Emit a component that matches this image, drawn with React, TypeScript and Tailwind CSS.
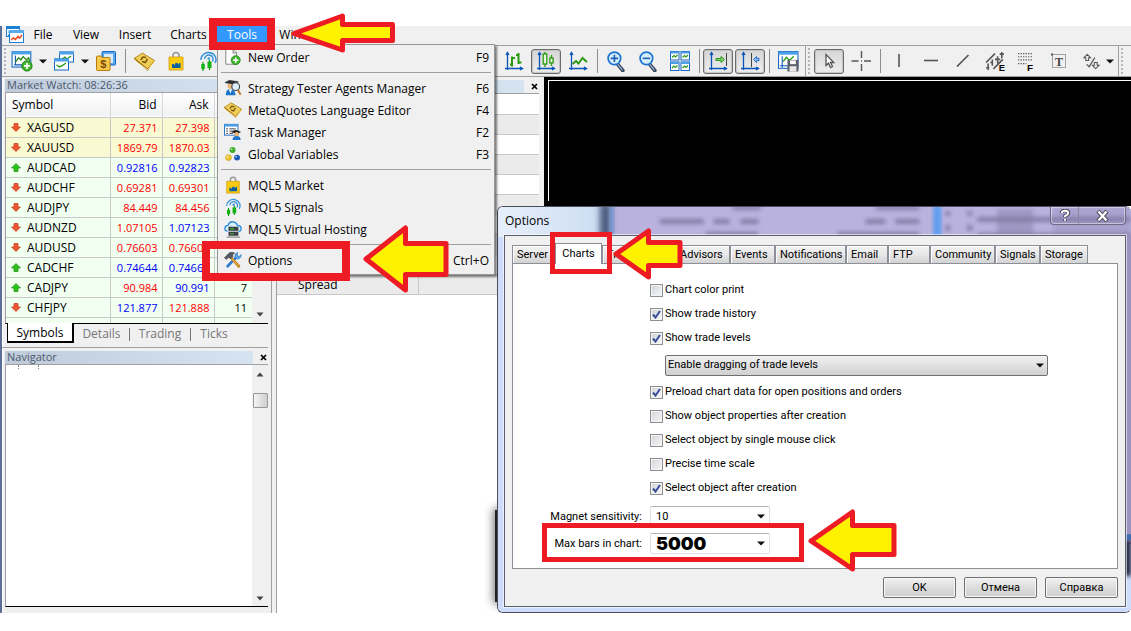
import React from "react";

type Dir = "up" | "down";
type Tone = "r" | "b";
type Quote = { name: string; dir: Dir; bid: string; bidTone: Tone; ask: string; askTone: Tone; spread?: string; metal?: boolean };

const quotes: Quote[] = [
  { name: "XAGUSD", dir: "down", bid: "27.371", bidTone: "r", ask: "27.398", askTone: "r", metal: true },
  { name: "XAUUSD", dir: "down", bid: "1869.79", bidTone: "r", ask: "1870.03", askTone: "r", metal: true },
  { name: "AUDCAD", dir: "up", bid: "0.92816", bidTone: "b", ask: "0.92823", askTone: "b" },
  { name: "AUDCHF", dir: "down", bid: "0.69281", bidTone: "r", ask: "0.69301", askTone: "r" },
  { name: "AUDJPY", dir: "down", bid: "84.449", bidTone: "r", ask: "84.456", askTone: "r" },
  { name: "AUDNZD", dir: "down", bid: "1.07105", bidTone: "r", ask: "1.07123", askTone: "b" },
  { name: "AUDUSD", dir: "down", bid: "0.76603", bidTone: "r", ask: "0.76609", askTone: "r" },
  { name: "CADCHF", dir: "up", bid: "0.74644", bidTone: "b", ask: "0.74661", askTone: "b" },
  { name: "CADJPY", dir: "up", bid: "90.984", bidTone: "r", ask: "90.991", askTone: "b", spread: "7" },
  { name: "CHFJPY", dir: "down", bid: "121.877", bidTone: "b", ask: "121.888", askTone: "r", spread: "11" },
];

const toneClass: Record<Tone, string> = { r: "text-[#ff0000]", b: "text-[#0000ff]" };

/* ---------- icons ---------- */

function Svg({ s = 20, children }: { s?: number; children: React.ReactNode }) {
  return (
    <svg width={s} height={s} viewBox="0 0 20 20" fill="none" aria-hidden="true" className="block shrink-0">
      {children}
    </svg>
  );
}

const Axes = () => (
  <path d="M3.5 1v18M1 17.5h18M2 4l1.5-2.5L5 4M16 16l2.5 1.5L16 19" stroke="#0b55b8" strokeWidth="1.3" />
);

const AppIcon = () => (
  <svg width="18" height="18" viewBox="0 0 18 18" fill="none" aria-hidden="true" className="block">
    <rect x="0.5" y="0.5" width="13" height="10" fill="#fff" stroke="#1b7fd6" />
    <rect x="0" y="0" width="14" height="3" fill="#1b7fd6" />
    <path d="M2 10l2-3M2 6h3" stroke="#1b7fd6" />
    <rect x="3.5" y="4.5" width="14" height="12" fill="#fff" stroke="#1b7fd6" />
    <rect x="3" y="4" width="15" height="3" fill="#58a8ec" />
    <path d="M5 14l2.5-2 2 1.5 2.500-3 1.500 1.500 2.500-3" stroke="#ee4b1e" strokeWidth="1.6" />
  </svg>
);

const ChartAddIcon = () => (
  <Svg s={22}>
    <rect x="1" y="1.500" width="17" height="14" fill="#fff" stroke="#1467c4" />
    <rect x="1" y="1" width="17" height="3" fill="#4ba0e8" />
    <path d="M4 5v9M3 13.500h13" stroke="#0b55b8" />
    <path d="M4 11l3-4 2 2 2-3 3 3 2-2 1 3" stroke="#2a8a12" strokeWidth="1.200" />
    <circle cx="14.500" cy="14.500" r="4.700" fill="#43b431" stroke="#1d7a12" strokeWidth="0.800" />
    <path d="M14.500 11.800v5.400M11.800 14.500h5.400" stroke="#fff" strokeWidth="1.600" />
  </Svg>
);

const WindowsIcon = () => (
  <Svg s={20}>
    <rect x="5.500" y="1" width="14" height="10" fill="#fff" stroke="#1467c4" />
    <rect x="5" y="0.500" width="15" height="3" fill="#4ba0e8" />
    <path d="M8 8l3-2 2 2 4-3" stroke="#2a9a12" strokeWidth="1.200" />
    <rect x="0.500" y="8" width="14" height="11" fill="#fff" stroke="#1467c4" />
    <rect x="0" y="7.500" width="15" height="3" fill="#4ba0e8" />
    <path d="M2.500 14l3 2 3-1.500 3.500-2.500" stroke="#2a9a12" strokeWidth="1.400" />
  </Svg>
);

const DollarIcon = () => (
  <Svg s={20}>
    <path d="M6 1.500q0-1 1-1h11.500q1 0 1 1v11.500q0 1-1 1H6z" fill="#5aa9ee" stroke="#1467c4" />
    <rect x="8" y="3" width="9" height="9" fill="#d8ecfb" />
    <path d="M.500 6q0-1 1-1h3.500l1 1.500h7q1 0 1 1v11q0 1-1 1H1.500q-1 0-1-1z" fill="#f6c84c" stroke="#b67a08" />
    <text x="7.200" y="17" textAnchor="middle" fontSize="11" fontWeight="bold" fontFamily="Liberation Sans, sans-serif" fill="#7a4a00">$</text>
  </Svg>
);

const EditorIcon = ({ s = 20 }: { s?: number }) => (
  <Svg s={s}>
    <path d="M.500 8l12.500 11 6-8.500v-2L13 14.500.500 6z" fill="#9a6a10" />
    <path d="M.500 7L8 2l11.500 7-6.500 8z" fill="#f0cf5a" stroke="#a9780f" strokeWidth="0.800" />
    <path d="M1 9.500L13 18l6-7" stroke="#fff2b8" strokeWidth="0.900" />
    <path d="M6.500 8.500l2-2.700 3 .400M12.800 7.500l-2 3.500-3-1" stroke="#7d5808" strokeWidth="1.500" />
    <path d="M14 15.500l5-6" stroke="#d9b43c" strokeWidth="1.400" />
  </Svg>
);

const BagIcon = ({ s = 20 }: { s?: number }) => (
  <Svg s={s}>
    <path d="M7 7V4.500q0-3 3-3t3 3V7" stroke="#9a9a9a" strokeWidth="1.700" />
    <path d="M3 6h14v13H3z" fill="#fbcb12" stroke="#d79c06" strokeWidth="0.800" />
    <path d="M6 17v-4h2v2l1.500-3h2l1.500 2v-2h1.500v5z" fill="#0a5f9e" />
  </Svg>
);

const SignalsIcon = ({ s = 20 }: { s?: number }) => (
  <Svg s={s}>
    <path d="M3 9a7.500 7 0 1 1 14 3M6.500 8a4.300 4.300 0 1 1 8 2.500" stroke="#3391dc" strokeWidth="1.400" />
    <circle cx="10.800" cy="7.500" r="1.300" fill="#3391dc" />
    <path d="M5 11v9M11.500 9v10" stroke="#0c9a0c" strokeWidth="1.200" />
    <rect x="3.300" y="13" width="3.500" height="5" fill="#12b212" />
    <rect x="9.500" y="10.500" width="4" height="6.500" fill="#12b212" />
  </Svg>
);

const BarsIcon = () => (
  <Svg>
    <Axes />
    <path d="M8 5.500v10M6 13.500h2M8 7h3M14.500 2v11M12 4h2.500M14.500 11.500h3" stroke="#289a10" strokeWidth="2" />
  </Svg>
);
const CandlesIcon = () => (
  <Svg>
    <Axes />
    <path d="M9 1v15M15.500 4v11" stroke="#289a10" strokeWidth="1.300" />
    <rect x="7.200" y="3" width="3.600" height="10" fill="#e8f7e2" stroke="#289a10" strokeWidth="1.300" />
    <rect x="13.900" y="7" width="3.200" height="5" fill="#e8f7e2" stroke="#289a10" strokeWidth="1.300" />
  </Svg>
);
const LineIcon = () => (
  <Svg>
    <Axes />
    <path d="M4.500 13l3.500-3 2.500 2.500 4-5.500 4.500 4" stroke="#289a10" strokeWidth="1.900" />
  </Svg>
);
const ZoomIcon = ({ plus = false }: { plus?: boolean }) => (
  <Svg s={21}>
    <path d="M11 12.500l5 6" stroke="#3c4a63" strokeWidth="3.600" strokeLinecap="round" />
    <path d="M11 12.500l4.500 5.500" stroke="#9fb2cf" strokeWidth="1.200" />
    <circle cx="8" cy="7" r="6" fill="#d6edfd" stroke="#1c74cf" strokeWidth="1.600" />
    <path d={plus ? "M4.500 7h7M8 3.500v7" : "M4.500 7h7"} stroke="#1a5fb4" strokeWidth="1.500" />
  </Svg>
);
const TileIcon = () => (
  <Svg s={20}>
    {[[0, 0], [10.500, 0], [0, 10.500], [10.500, 10.500]].map(([x, y], i) => (
      <g key={i} transform={`translate(${x} ${y})`}>
        <rect x="0.500" y="0.500" width="8.500" height="8.500" fill="#fff" stroke="#1467c4" />
        <rect x="0.500" y="0.500" width="8.500" height="2" fill="#4ba0e8" />
        <path d="M2 6.500l2-2 1.500 1.500 2-2" stroke="#289a10" strokeWidth="1.100" />
      </g>
    ))}
  </Svg>
);
const AutoScrollIcon = () => (
  <Svg>
    <Axes />
    <path d="M18.500 2v13" stroke="#444" strokeWidth="1" />
    <path d="M8 7.500h5V5.500L16.500 8.500 13 11.500V9.500H8z" fill="#8ad874" stroke="#1f8a0e" strokeWidth="0.900" />
  </Svg>
);
const ShiftIcon = () => (
  <Svg>
    <Axes />
    <path d="M11.500 2v14" stroke="#444" strokeWidth="1" />
    <path d="M19 7.300h-2.500V5.500L13.500 8.500l3 3V9.700H19z" fill="#8cbdf5" stroke="#1c62c4" strokeWidth="0.900" />
  </Svg>
);
const TemplateIcon = () => (
  <Svg s={21}>
    <rect x="0.500" y="0.500" width="18.500" height="16" fill="#fff" stroke="#1467c4" />
    <rect x="0.500" y="0.500" width="18.500" height="3" fill="#4ba0e8" />
    <path d="M4 5v11M2 14h8" stroke="#0b55b8" />
    <path d="M5 10l3-4 3 3 4-4" stroke="#289a10" strokeWidth="1.200" />
    <path d="M9 8.500h10.500v11H9z" fill="#5c6068" />
    <rect x="11.500" y="9" width="5.500" height="3.500" fill="#fff" />
    <rect x="11" y="14.500" width="6.500" height="5" fill="#e8e8e8" />
  </Svg>
);
const CursorIcon = () => (
  <Svg>
    <path d="M7 3.500v11l2.500-2.300 2 4.300 2-1-2-4h3.300z" fill="#fff" stroke="#555" strokeWidth="1.300" />
  </Svg>
);
const CrossIcon = () => (
  <Svg>
    <path d="M10.500 0v7M10.500 13v7M0.500 10h7M13 10h7M10 10h1" stroke="#555" strokeWidth="1.400" />
  </Svg>
);
const VLineIcon = () => (<Svg><path d="M10 3v13" stroke="#555" strokeWidth="1.600" /></Svg>);
const HLineIcon = () => (<Svg><path d="M3 9.500h14" stroke="#555" strokeWidth="1.600" /></Svg>);
const DLineIcon = () => (<Svg><path d="M4 15.500L15.500 4" stroke="#555" strokeWidth="1.700" /></Svg>);
const ChannelIcon = () => (
  <Svg s={21}>
    <path d="M1 11L9.500 2.500M8 17L17 8M3 18v-6M1 16h3M7 14V8M5 11h2M12 12V5M9.500 8h5M16 7V1M14 3h4" stroke="#555" strokeWidth="1.500" />
    <text x="13" y="19.500" fontSize="9" fontWeight="bold" fontFamily="Liberation Sans, sans-serif" fill="#000">E</text>
  </Svg>
);
const FiboIcon = () => (
  <Svg s={21}>
    <path d="M1 2.500h14M1 5.500h14M1 8.500h14M1 12h8" stroke="#555" strokeWidth="1.100" strokeDasharray="1.200 1.200" />
    <text x="9.500" y="19.500" fontSize="9.500" fontWeight="bold" fontFamily="Liberation Sans, sans-serif" fill="#000">F</text>
  </Svg>
);
const TextIcon = () => (
  <Svg s={20}>
    <rect x="3.500" y="3.500" width="13" height="13" stroke="#555" strokeDasharray="1 1" />
    <path d="M2 2.500h2v2H2z" fill="#555" />
    <text x="10" y="14.500" textAnchor="middle" fontSize="12" fontWeight="bold" fontFamily="Liberation Serif, serif" fill="#444">T</text>
  </Svg>
);
const ArrowsIcon = () => (
  <Svg s={19}>
    <path d="M5.500 2.500L9 6H7v3H4V6H2zM14.500 17.500L11 14h2v-3h3v3h2z" stroke="#555" strokeWidth="1.100" />
    <path d="M5 13l2.500 2.500L13.500 6" stroke="#555" strokeWidth="1.300" />
  </Svg>
);

const NewOrderIcon = () => (
  <Svg s={18}>
    <path d="M2 1.500h8l4 4V18H2z" fill="#fff" stroke="#7a7a7a" />
    <path d="M10 1.500v4h4" stroke="#7a7a7a" />
    <circle cx="13" cy="13.500" r="5" fill="#43b431" stroke="#1d7a12" strokeWidth="0.800" />
    <path d="M13 10.500v6M10 13.500h6" stroke="#fff" strokeWidth="1.700" />
  </Svg>
);
const AgentsIcon = () => (
  <Svg s={18}>
    <path d="M1 4l5-2.500L16 3l-4 3.500z" fill="#2c3138" stroke="#111" strokeWidth="0.500" />
    <path d="M4 5.500h6v4q-3 3-6 0z" fill="#e9b77a" />
    <path d="M2 18q0-7 5-7t6 7z" fill="#1d76c9" />
    <path d="M5.500 11.500L7 16l2-4.500z" fill="#fff" />
    <circle cx="13" cy="8.500" r="4.300" fill="#dceefb" stroke="#444" strokeWidth="1.300" />
    <path d="M15.500 12.500l3 5" stroke="#c17a2a" strokeWidth="2.200" />
  </Svg>
);
const TaskIcon = () => (
  <Svg s={18}>
    <rect x="0.500" y="1.500" width="15" height="12" fill="#fff" stroke="#1467c4" />
    <rect x="0.500" y="1.500" width="15" height="2.500" fill="#4ba0e8" />
    <path d="M2.500 6.500h2M2.500 9h2M2.500 11.500h2M6 6.500h7M6 9h7M6 11.500h4" stroke="#444" strokeWidth="1.100" />
    <path d="M8 10l5-2.500 6 2.500-5 2.500z" fill="#222" />
    <circle cx="14" cy="12.500" r="2.500" fill="#e9b77a" />
    <path d="M9.500 19q0-4.500 4.500-4.500T18.500 19z" fill="#1d76c9" />
  </Svg>
);
const GlobalsIcon = () => (
  <Svg s={18}>
    <circle cx="9.500" cy="5.500" r="3.300" fill="#3dae2b" />
    <circle cx="5" cy="14" r="3.300" fill="#efc52d" stroke="#b8900f" strokeWidth="0.600" />
    <circle cx="14.500" cy="14" r="3.300" fill="#1b56b8" />
    <circle cx="8.500" cy="4.500" r="1" fill="#c6f2ba" />
    <circle cx="4" cy="13" r="1" fill="#fff5b8" />
    <circle cx="13.500" cy="13" r="1" fill="#a8c8f8" />
  </Svg>
);
const HostingIcon = () => (
  <Svg s={18}>
    <path d="M4 12.500q-3.500-.500-3-3.500t3.500-3Q6 1.500 10 2t5 4q4 0 4 3.500t-3 3" fill="#d9effc" stroke="#2688d8" strokeWidth="1.400" />
    <rect x="5" y="7.500" width="11" height="4.500" fill="#3a3f45" />
    <rect x="5" y="13" width="11" height="4.500" fill="#3a3f45" />
    <path d="M7 9.800h4M7 15.300h4" stroke="#35c235" strokeWidth="1.300" />
    <path d="M3 19h15" stroke="#666" strokeWidth="1" />
  </Svg>
);
const OptionsIcon = () => (
  <Svg s={18}>
    <path d="M4 17L14.500 6" stroke="#2f7fd0" strokeWidth="3" strokeLinecap="round" />
    <path d="M12.500 7.500q-1.500-4 2.500-6L14.500 5l2 1.500L19 4q0 5-4.500 5z" fill="#67b2f2" stroke="#1b64b5" strokeWidth="0.700" />
    <path d="M7 6.500L16.500 17" stroke="#c4801e" strokeWidth="3.200" strokeLinecap="round" />
    <path d="M7 6.500l9 10" stroke="#f3c565" strokeWidth="1" />
    <path d="M0.500 7.500L6 2q3-1.500 6 .500l-2.500 1L10 6 7.500 8.500 5.500 7 2.500 9.500z" fill="#555c66" stroke="#222" strokeWidth="0.500" />
  </Svg>
);

const Caret = () => (
  <svg width="8" height="5" viewBox="0 0 8 5" aria-hidden="true" className="block shrink-0">
    <path d="M0 0.500h8L4 4.500z" fill="#111" />
  </svg>
);

const DirArrow = ({ dir }: { dir: Dir }) => (
  <svg width="10" height="9" viewBox="0 0 10 9" aria-hidden="true" className="block shrink-0">
    {dir === "down" ? (
      <path d="M3 .500h4V4h2.500L5 8.500.500 4H3z" fill="#f0562f" stroke="#bf3a17" strokeWidth="0.700" />
    ) : (
      <path d="M3 8.500h4V5h2.500L5 .500.500 5H3z" fill="#2fc41c" stroke="#178a0a" strokeWidth="0.700" />
    )}
  </svg>
);

/* ---------- toolbar ---------- */

function Tool({ label, pressed = false, children }: { label: string; pressed?: boolean; children: React.ReactNode }) {
  return (
    <button
      type="button"
      aria-label={label}
      className={
        pressed
          ? "flex h-[25px] w-[30px] shrink-0 items-center justify-center rounded-[3px] border border-[#6a6a6a] bg-gradient-to-b from-[#d6d6d6] to-[#efefef] shadow-[inset_0_0_1px_1px_#c4c4c4]"
          : "flex h-[25px] w-[30px] shrink-0 items-center justify-center"
      }
    >
      {children}
    </button>
  );
}
const Sep = () => (
  <div className="flex w-1 shrink-0 justify-center">
    <div className="h-6 w-px bg-[#8e8e8e]" />
  </div>
);
const Grip = () => <div className="ml-[2px] h-[26px] w-[3px] shrink-0 border-l-2 border-dotted border-[#b5b5b5]" />;

function Toolbar() {
  return (
    <div className="flex h-[32px] items-center overflow-hidden border-y border-[#a0a0a0] bg-[#f0f0f0]">
      <Grip />
      <div className="flex items-center gap-[2px]">
        <Tool label="New chart"><ChartAddIcon /></Tool>
        <button type="button" aria-label="New chart list" className="w-2"><Caret /></button>
        <Tool label="Profiles"><WindowsIcon /></Tool>
        <button type="button" aria-label="Profile list" className="w-2"><Caret /></button>
        <Tool label="Market Watch"><DollarIcon /></Tool>
        <Sep />
        <Tool label="MetaQuotes Language Editor"><EditorIcon s={21} /></Tool>
        <Tool label="Market"><BagIcon /></Tool>
        <Tool label="Signals"><SignalsIcon /></Tool>
      </div>
      <div className="ml-[276px] flex items-center gap-[2px]">
        <Tool label="Bar chart"><BarsIcon /></Tool>
        <Tool label="Candlesticks" pressed><CandlesIcon /></Tool>
        <Tool label="Line chart"><LineIcon /></Tool>
        <Sep />
        <Tool label="Zoom in"><ZoomIcon plus /></Tool>
        <Tool label="Zoom out"><ZoomIcon /></Tool>
        <Tool label="Tile windows"><TileIcon /></Tool>
        <Sep />
        <Tool label="Auto scroll" pressed><AutoScrollIcon /></Tool>
        <Tool label="Chart shift" pressed><ShiftIcon /></Tool>
        <Sep />
        <Tool label="Templates"><TemplateIcon /></Tool>
      </div>
      <div className="ml-[2px] h-full w-px shrink-0 bg-[#a0a0a0]" />
      <Grip />
      <div className="ml-[3px] flex items-center gap-[2px]">
        <Tool label="Cursor" pressed><CursorIcon /></Tool>
        <Tool label="Crosshair"><CrossIcon /></Tool>
        <Sep />
        <Tool label="Vertical line"><VLineIcon /></Tool>
        <Tool label="Horizontal line"><HLineIcon /></Tool>
        <Tool label="Trend line"><DLineIcon /></Tool>
        <Tool label="Equidistant channel"><ChannelIcon /></Tool>
        <Tool label="Fibonacci"><FiboIcon /></Tool>
        <Tool label="Text"><TextIcon /></Tool>
        <Tool label="Arrows"><ArrowsIcon /></Tool>
      </div>
      <button type="button" aria-label="Arrow list" className="w-2 shrink-0"><Caret /></button>
      <div className="ml-[4px] h-full w-px shrink-0 bg-[#a0a0a0]" />
      <Grip />
    </div>
  );
}

/* ---------- menu ---------- */

function MenuRow({ icon, label, hint }: { icon: React.ReactNode; label: string; hint?: string }) {
  return (
    <button type="button" role="menuitem" className="flex h-[22px] w-full items-center gap-[6px] pr-[5px] pl-[6px] text-left text-black">
      {icon}
      <span className="flex-1">{label}</span>
      {hint && <span>{hint}</span>}
    </button>
  );
}
const MenuSep = () => (
  <div className="flex h-[9px] items-center">
    <div className="mx-[3px] h-px flex-1 bg-[#a0a0a0]" />
  </div>
);

function ToolsMenu() {
  return (
    <div role="menu" className="absolute top-[18px] left-0 z-10 w-[278px] border border-[#979797] bg-[#f0f0f0] pt-px pb-[3px] shadow-[2px_2px_2px_rgba(0,0,0,0.5)]">
      <MenuRow icon={<NewOrderIcon />} label="New Order" hint="F9" />
      <MenuSep />
      <MenuRow icon={<AgentsIcon />} label="Strategy Tester Agents Manager" hint="F6" />
      <MenuRow icon={<EditorIcon s={18} />} label="MetaQuotes Language Editor" hint="F4" />
      <MenuRow icon={<TaskIcon />} label="Task Manager" hint="F2" />
      <MenuRow icon={<GlobalsIcon />} label="Global Variables" hint="F3" />
      <MenuSep />
      <MenuRow icon={<BagIcon s={18} />} label="MQL5 Market" />
      <MenuRow icon={<SignalsIcon s={18} />} label="MQL5 Signals" />
      <MenuRow icon={<HostingIcon />} label="MQL5 Virtual Hosting" />
      <MenuSep />
      <MenuRow icon={<OptionsIcon />} label="Options" hint="Ctrl+O" />
    </div>
  );
}

function MenuBar() {
  return (
    <div className="flex h-[19px] items-start bg-[#f0f0f0] pl-[4px] text-[12px] leading-[17px]">
      <AppIcon />
      <button type="button" className="w-[38px]">File</button>
      <button type="button" className="w-[48px]">View</button>
      <button type="button" className="w-[50px]">Insert</button>
      <button type="button" className="w-[57px]">Charts</button>
      <div className="relative w-[50px]">
        <button type="button" className="w-full bg-[#3399ff] text-white">Tools</button>
        <ToolsMenu />
      </div>
      <button type="button" className="w-[70px]">Window</button>
    </div>
  );
}

/* ---------- docked panels ---------- */

function DockTitle({ children }: { children?: React.ReactNode }) {
  return (
    <div className="flex h-[14px] items-center justify-between pr-px">
      <div className="h-[13px] flex-1 bg-gradient-to-r from-[#bfcbdb] to-[#d6e4f1] pl-[2px] text-[11px] leading-[12px] whitespace-nowrap text-[#4c5a6b]">{children}</div>
      <button type="button" aria-label="Close" className="ml-[7px] block">
        <svg width="7" height="7" viewBox="0 0 7 7" aria-hidden="true"><path d="M1 1l5 5M6 1L1 6" stroke="#000" strokeWidth="1.700" /></svg>
      </button>
    </div>
  );
}

const ScrollArrow = ({ up = false }: { up?: boolean }) => (
  <svg width="8" height="5" viewBox="0 0 8 5" aria-hidden="true" className="block">
    <path d={up ? "M.500 4.500h7L4 .500z" : "M.500.500h7L4 4.500z"} fill="#444" />
  </svg>
);

function MarketWatch() {
  return (
    <section>
      <DockTitle>Market Watch: 08:26:36</DockTitle>
      <div className="flex h-[232px] overflow-hidden border-t border-b border-l border-t-[#a0a0a0] border-b-black border-l-[#a0a0a0] bg-[#f0fff0]">
        <table className="h-full w-[246px] table-fixed border-collapse text-[12px] leading-[15px]">
          <colgroup>
            <col className="w-[104px]" />
            <col className="w-[52px]" />
            <col className="w-[52px]" />
            <col />
          </colgroup>
          <thead>
            <tr className="h-[24px] border-b border-[#c8c8c8] bg-gradient-to-b from-white to-[#f1f2f4]">
              <th className="border-r border-[#d8d8d8] pl-[6px] text-left font-normal">Symbol</th>
              <th className="border-r border-[#d8d8d8] pr-[5px] text-right font-normal">Bid</th>
              <th className="border-r border-[#d8d8d8] pr-[5px] text-right font-normal">Ask</th>
              <th aria-label="Spread" />
            </tr>
          </thead>
          <tbody>
            {quotes.map((q) => (
              <tr key={q.name} className={q.metal ? "h-[20px] border-b border-[#c8c8c8] bg-[#fafad2]" : "h-[20px] border-b border-[#c8c8c8] bg-[#f0fff0]"}>
                <td className="border-r border-[#c8c8c8]">
                  <span className="flex items-center gap-[6px] pl-[5px]"><DirArrow dir={q.dir} />{q.name}</span>
                </td>
                <td className={`border-r border-[#c8c8c8] pr-[4px] text-right text-[11px] ${toneClass[q.bidTone]}`}>{q.bid}</td>
                <td className={`border-r border-[#c8c8c8] pr-[4px] text-right text-[11px] ${toneClass[q.askTone]}`}>{q.ask}</td>
                <td className="pr-[5px] text-right text-[11px]">{q.spread}</td>
              </tr>
            ))}
            <tr>
              <td className="border-r border-[#c8c8c8]" />
              <td className="border-r border-[#c8c8c8]" />
              <td className="border-r border-[#c8c8c8]" />
              <td />
            </tr>
          </tbody>
        </table>
        <div className="flex flex-1 flex-col items-center justify-end bg-[#f0f0f0] pb-[6px]"><ScrollArrow /></div>
      </div>
      <div className="flex h-[23px] items-start text-[12px] leading-[19px] text-[#777]">
        <button type="button" className="-mt-px ml-[2px] h-[20px] w-[67px] border border-t-0 border-r-2 border-b-2 border-black bg-white text-black">Symbols</button>
        <button type="button" className="w-[55px]">Details</button>
        <span className="mt-[4px] h-[13px] w-px bg-[#777]" />
        <button type="button" className="w-[60px]">Trading</button>
        <span className="mt-[4px] h-[13px] w-px bg-[#777]" />
        <button type="button" className="w-[46px]">Ticks</button>
      </div>
    </section>
  );
}

function Navigator() {
  return (
    <section className="pt-[2px]">
      <DockTitle>Navigator</DockTitle>
      <div className="flex h-[243px] border-t border-b border-l border-t-[#a0a0a0] border-b-black border-l-[#a0a0a0] bg-white">
        <div className="flex flex-1 gap-[19px] pl-[12px]">
          <span className="h-[4px] border-l border-dotted border-[#888]" />
          <span className="h-[4px] border-l border-dotted border-[#888]" />
        </div>
        <div className="flex w-[16px] flex-col items-center bg-[#f0f0f0] pt-[7px] pb-[5px]">
          <ScrollArrow up />
          <div className="mt-[16px] h-[15px] w-[15px] rounded-[1px] border border-[#979797] bg-gradient-to-r from-[#f4f4f4] to-[#cfcfd2]" />
          <div className="flex-1" />
          <ScrollArrow />
        </div>
      </div>
    </section>
  );
}

function DataWindow() {
  const rows = ["", "", "", "", "", "", "", "", "", "Spread"];
  return (
    <section className="flex w-[268px] shrink-0 flex-col border-l border-[#a0a0a0] bg-[#f0f0f0] pt-[2px] pr-[5px]">
      <DockTitle />
      <div className="flex-1 border-t border-[#a0a0a0] bg-white">
        <table className="w-full table-fixed border-collapse text-[12px] leading-[15px]">
          <tbody>
            {rows.map((r, i) => (
              <tr key={i} className={i % 2 ? "h-[20px] border-b border-[#c8c8c8] bg-[#ebebeb]" : "h-[20px] border-b border-[#c8c8c8] bg-white"}>
                <td className="w-[141px] border-r border-[#c8c8c8] pl-[21px]">{r}</td>
                <td />
              </tr>
            ))}
          </tbody>
        </table>
      </div>
    </section>
  );
}

/* ---------- options dialog ---------- */

function Check({ label, on = false }: { label: string; on?: boolean }) {
  return (
    <label className="col-start-2 flex h-[24px] items-center gap-[2px]">
      <input type="checkbox" defaultChecked={on} className="peer sr-only" />
      <span className="flex h-[13px] w-[13px] shrink-0 items-center justify-center border border-[#8e8f8f] bg-gradient-to-br from-[#cfd4da] to-[#f8f9fa] shadow-[inset_0_0_0_1px_#f4f4f4] peer-checked:[&>svg]:visible">
        <svg width="9" height="9" viewBox="0 0 9 9" aria-hidden="true" className="invisible">
          <path d="M1 4.500L3.500 7.500 8 1" stroke="#3a4f96" strokeWidth="2" fill="none" />
        </svg>
      </span>
      {label}
    </label>
  );
}

function Combo({ id, label, value, big = false }: { id: string; label: string; value: string; big?: boolean }) {
  return (
    <>
      <label htmlFor={id} className="text-right">{label}</label>
      <div className="relative flex h-[27px] items-center">
        <select
          id={id}
          className={
            big
              ? "h-[21px] w-[120px] appearance-none rounded-[2px] border border-[#dcdfe6] border-t-[#b4b6bd] bg-white pl-[5px] font-[Inter,sans-serif] text-[18px] leading-[19px] font-black"
              : "h-[21px] w-[120px] appearance-none rounded-[2px] border border-[#dcdfe6] border-t-[#b4b6bd] bg-white pl-[5px]"
          }
        >
          <option>{value}</option>
        </select>
        <span className="pointer-events-none absolute left-[107px]"><Caret /></span>
      </div>
    </>
  );
}

const dialogTabs: [string, string][] = [
  ["Server", "w-[43px]"],
  ["Charts", "w-[47px]"],
  ["Trade", "w-[39px]"],
  ["Expert Advisors", "w-[89px]"],
  ["Events", "w-[45px]"],
  ["Notifications", "w-[71px]"],
  ["Email", "w-[42px]"],
  ["FTP", "w-[42px]"],
  ["Community", "w-[65px]"],
  ["Signals", "w-[45px]"],
  ["Storage", "w-[48px]"],
];

function TitleGlass() {
  return (
    <svg className="absolute inset-0 h-full w-full" preserveAspectRatio="none" viewBox="0 0 634 406" aria-hidden="true">
      <defs>
        <filter id="soft" x="-20%" y="-50%" width="140%" height="200%"><feGaussianBlur stdDeviation="2" /></filter>
        <filter id="softer" x="-100%" y="-20%" width="300%" height="140%"><feGaussianBlur stdDeviation="3" /></filter>
        <linearGradient id="ice" x1="0" x2="1" y1="0" y2="0"><stop offset="0" stopColor="#e6effb" /><stop offset="1" stopColor="#cbdcf1" /></linearGradient>
      </defs>
      <rect width="634" height="406" fill="#cddcfb" />
      <rect width="110" height="30" fill="url(#ice)" />
      <rect x="112" width="522" height="30" fill="#b9b2df" />
      <rect x="102" y="-4" width="11" height="36" fill="#46587c" filter="url(#softer)" />
      <rect x="112" y="-4" width="4" height="36" fill="#6f9ad6" filter="url(#soft)" />
      <g fill="#77719a" filter="url(#soft)" opacity="0.800">
        <rect x="235" y="-1" width="28" height="4" />
        <rect x="162" y="12" width="44" height="5" />
        <rect x="216" y="12" width="16" height="5" />
        <rect x="243" y="12" width="18" height="5" />
        <rect x="208" y="25" width="52" height="5" />
        <rect x="378" y="-1" width="44" height="4" />
        <rect x="368" y="12" width="20" height="5" />
        <rect x="398" y="12" width="24" height="5" />
        <rect x="340" y="25" width="82" height="5" />
        <rect x="448" y="4" width="5" height="5" />
        <rect x="470" y="4" width="5" height="5" />
        <rect x="448" y="18" width="5" height="6" />
        <rect x="470" y="18" width="5" height="6" />
        <rect x="480" y="10" width="154" height="5" />
        <rect x="480" y="26" width="154" height="4" />
        <rect x="500" y="2" width="36" height="24" opacity="0.500" />
        <rect x="556" y="0" width="78" height="28" opacity="0.300" />
      </g>
      <rect x="436" y="-2" width="8" height="34" fill="#5b9cf0" filter="url(#soft)" />
      <rect x="627" y="28" width="7" height="310" fill="#9a93bf" />
      <rect x="627" y="334" width="7" height="36" fill="#1d2438" filter="url(#soft)" />
      <rect x="627" y="328" width="7" height="6" fill="#3f6db0" />
    </svg>
  );
}

function OptionsDialog() {
  const btn = "h-[21px] w-[73px] rounded-[2px] border border-[#707070] bg-gradient-to-b from-[#f2f2f2] from-0% via-[#dddddd] via-50% to-[#cfcfcf] text-center leading-[18px] shadow-[inset_0_0_0_1px_#f7f7f7]";
  return (
    <div role="dialog" aria-labelledby="options-title" className="absolute top-[206px] right-0 left-[497px] overflow-hidden rounded-[6px] border border-r-0 border-[#4b4f5c] pr-[5px] pb-[5px] pl-[6px]">
      <TitleGlass />
      <header className="relative flex h-[28px] items-start justify-between">
        <h2 id="options-title" className="pl-px font-['Open_Sans','Noto_Sans',sans-serif] text-[12px] leading-[28px]">Options</h2>
        <div className="flex h-[18px] rounded-b-[4px] border border-t-0 border-[#6d6a85] shadow-[inset_0_0_0_1px_rgba(255,255,255,0.4)]">
          <button type="button" aria-label="Help" className="flex w-[28px] items-center justify-center border-r border-[#8b88a5]">
            <svg width="12" height="13" viewBox="0 0 12 13" fill="none" aria-hidden="true">
              <path d="M2.500 4q0-2.500 3.500-2.500T9.500 4Q9.500 5.500 6 7v1M6 10v2" stroke="#4a4a5a" strokeWidth="3.600" />
              <path d="M2.800 4q0-2.200 3.200-2.200T9.200 4Q9.200 5.500 6 7v1M6 10v1.700" stroke="#fff" strokeWidth="1.900" />
            </svg>
          </button>
          <button type="button" aria-label="Close" className="flex w-[46px] items-center justify-center">
            <svg width="13" height="12" viewBox="0 0 13 12" fill="none" aria-hidden="true">
              <path d="M2 1l9 10M11 1L2 11" stroke="#4a4a5a" strokeWidth="4.200" />
              <path d="M2.500 1.500l8 9M10.500 1.500l-8 9" stroke="#fff" strokeWidth="2.300" />
            </svg>
          </button>
        </div>
      </header>
      <div className="relative border border-[#5c5f6c] bg-[#f0f0f0] px-[7px] pt-[7px] pb-[8px] shadow-[0_0_0_1px_rgba(255,255,255,0.6)]">
        <div role="tablist" className="flex h-[20px] items-end">
          {dialogTabs.map(([name, w]) =>
            name === "Charts" ? (
              <button key={name} type="button" role="tab" aria-selected className={`${w} relative z-10 -mb-px h-[21px] shrink-0 border border-b-0 border-[#8c8e98] bg-white leading-[18px] whitespace-nowrap`}>{name}</button>
            ) : (
              <button key={name} type="button" role="tab" className={`${w} h-[18px] shrink-0 overflow-hidden border border-b-0 border-[#8c8e98] bg-gradient-to-b from-[#f2f2f2] via-[#e8e8e8] to-[#d2d2d2] pl-[4px] text-left leading-[18px] whitespace-nowrap shadow-[inset_1px_1px_0_#fff]`}>{name}</button>
            ),
          )}
        </div>
        <div className="grid grid-cols-[129px_1fr] items-center gap-x-[8px] border border-[#8c8e98] bg-white pt-[14px] pb-[11px]">
          <Check label="Chart color print" />
          <Check label="Show trade history" on />
          <Check label="Show trade levels" on />
          <div className="relative col-start-2 mr-[69px] ml-[15px] flex h-[30px] items-center">
            <select aria-label="Trade level dragging" className="h-[21px] w-full appearance-none rounded-[2px] border border-[#707070] bg-gradient-to-b from-[#f2f2f2] to-[#d0d0d0] pl-[2px]">
              <option>Enable dragging of trade levels</option>
            </select>
            <span className="pointer-events-none absolute right-[4px]"><Caret /></span>
          </div>
          <Check label="Preload chart data for open positions and orders" on />
          <Check label="Show object properties after creation" />
          <Check label="Select object by single mouse click" />
          <Check label="Precise time scale" />
          <Check label="Select object after creation" on />
          <div className="col-span-2 h-[3px]" />
          <Combo id="magnet" label="Magnet sensitivity:" value="10" />
          <Combo id="maxbars" label="Max bars in chart:" value="5000" big />
        </div>
        <div className="flex justify-end gap-[8px] pt-[8px]">
          <button type="button" className={btn}>OK</button>
          <button type="button" className={btn}>Отмена</button>
          <button type="button" className={btn}>Справка</button>
        </div>
      </div>
    </div>
  );
}

/* ---------- callouts ---------- */

function Callouts() {
  return (
    <svg width="1131" height="631" viewBox="0 0 1131 631" fill="none" aria-hidden="true" className="pointer-events-none absolute top-0 left-0 z-20">
      <g stroke="#ed1c24" strokeWidth="8">
        <rect x="213" y="22" width="58" height="24" />
        <rect x="206" y="245" width="140" height="32" />
      </g>
      <g stroke="#ed1c24" strokeWidth="5">
        <rect x="552.500" y="234.500" width="57" height="37" />
        <rect x="544.500" y="525.500" width="257" height="34" />
      </g>
      <g fill="#fff200" stroke="#ed1c24" strokeWidth="5" strokeLinejoin="round">
        <path d="M294 33.500L342.500 16v8.500h50v16h-50V50z" />
        <path d="M366 259l39.500-31v15.500H446v31h-40.500V290z" />
        <path d="M616 254l32.500-23v11.500H680v23h-31.500V277z" />
        <path d="M811 541l41.500-29v13.500H894v29h-41.500V569z" />
      </g>
    </svg>
  );
}

export default function App() {
  return (
    <div className="relative min-h-screen overflow-hidden bg-white pt-[26px] font-['Open_Sans','Noto_Sans',sans-serif] text-[11px] leading-[14px] text-black">
      <div className="border-l-2 border-[#5b6f96] bg-[#f0f0f0] shadow-[inset_1px_0_0_#fff]">
        <MenuBar />
        <Toolbar />
        <div className="flex h-[536px]">
          <div className="w-[270px] shrink-0 border-r border-[#a0a0a0] pt-px pr-[3px]">
            <div className="border-b border-[#a0a0a0] pl-[3px]"><MarketWatch /></div>
            <div className="pl-[3px]"><Navigator /></div>
          </div>
          <div className="w-[4px] shrink-0" />
          <DataWindow />
          <main className="min-w-0 flex-1 bg-white">
            <div className="h-[129px] bg-black pt-[3px] pl-[4px]">
              <div className="h-[121px] border-t border-l border-white" />
            </div>
          </main>
        </div>
      </div>
      <div className="absolute top-[510px] left-[495px] h-[92px] w-[8px] bg-[#222] shadow-[0_0_8px_2px_rgba(0,0,0,0.5)]" />
      <div className="font-[Roboto,'Open_Sans',sans-serif]">
        <OptionsDialog />
      </div>
      <Callouts />
    </div>
  );
}
